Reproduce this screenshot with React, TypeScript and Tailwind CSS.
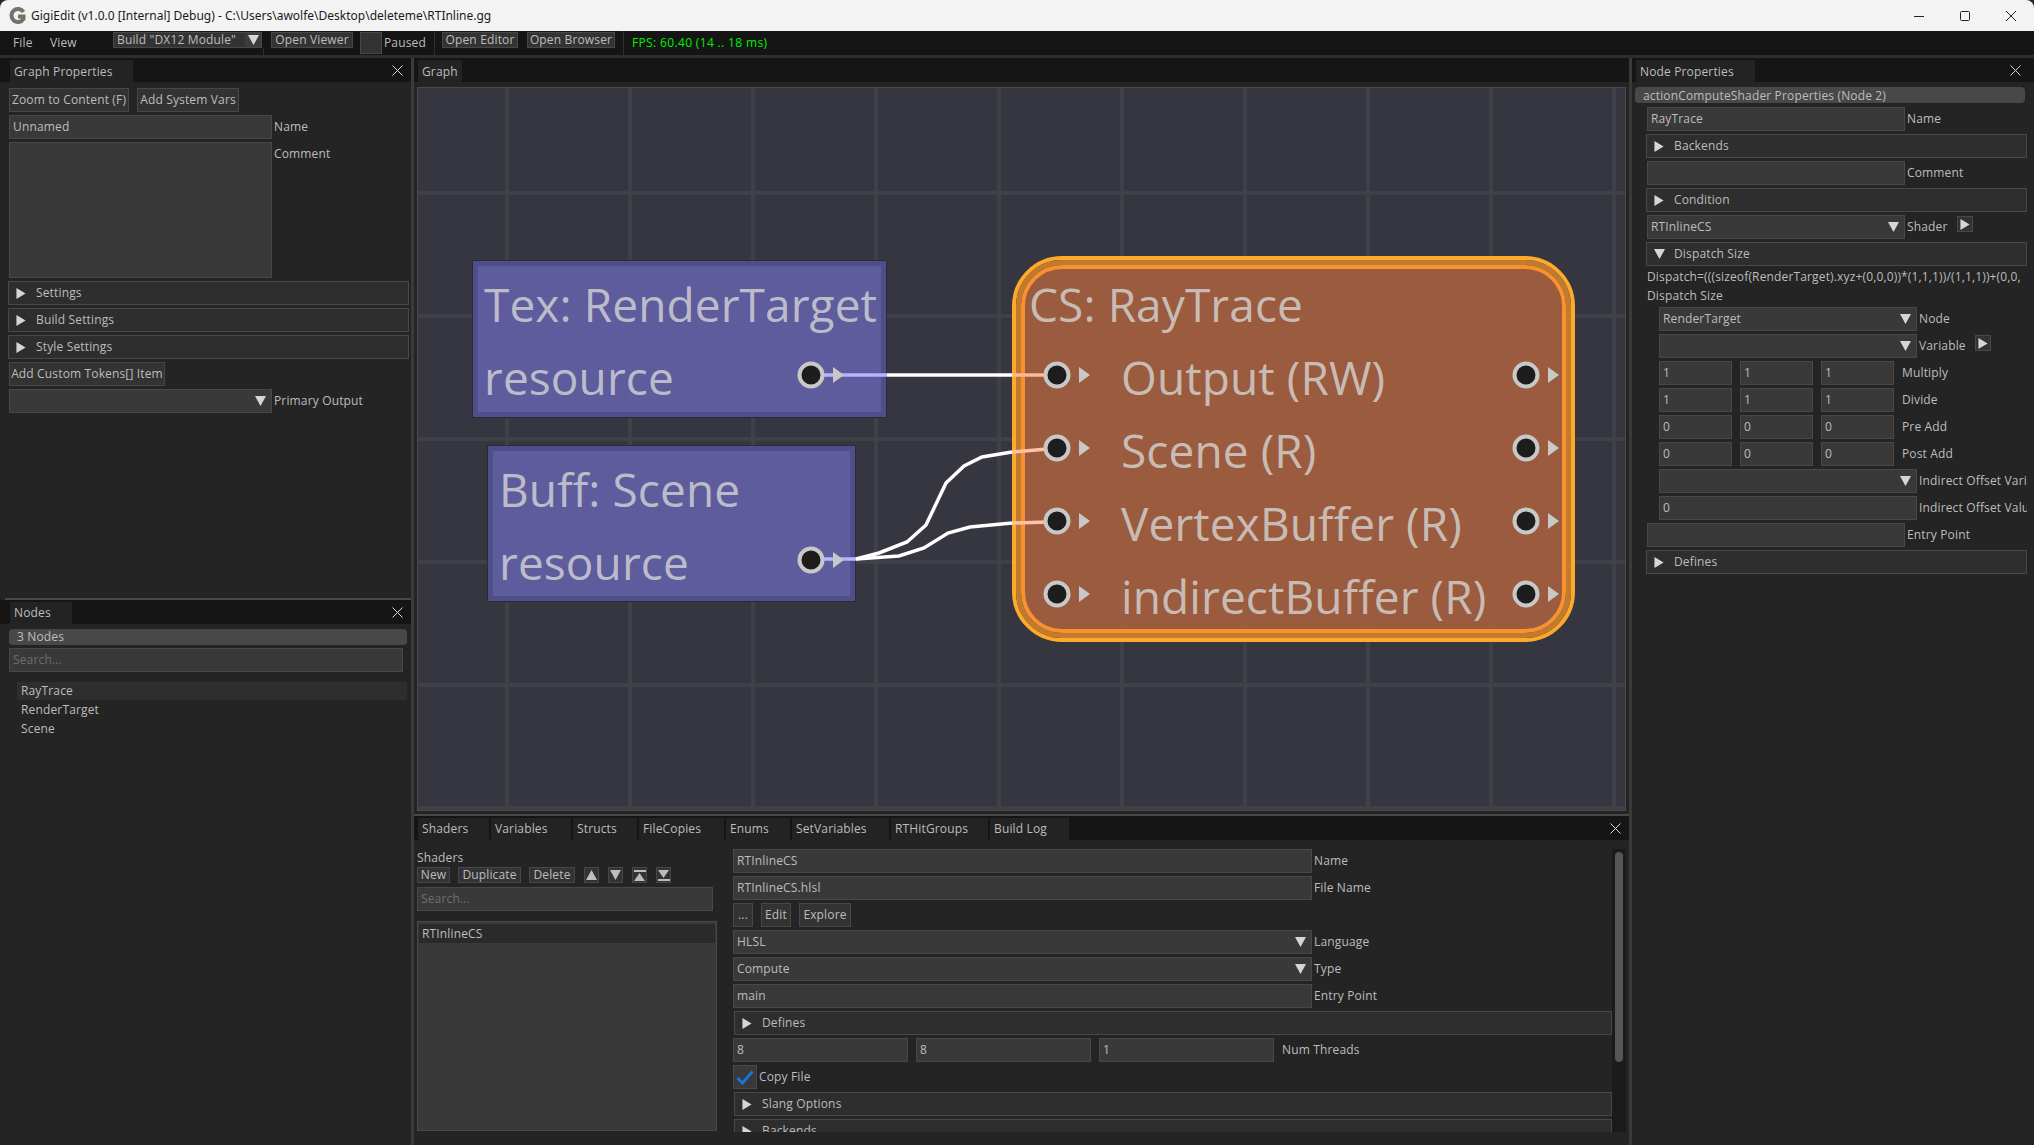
import React from 'react';

const Tri = ({ dir = 'right', size = 10, className = '' }: { dir?: 'right' | 'down' | 'up'; size?: number; className?: string }) => {
  const pts = dir === 'right' ? '0,0 10,6 0,12' : dir === 'down' ? '0,0 12,0 6,11' : '0,11 12,11 6,0';
  const vb = dir === 'right' ? '0 0 10 12' : '0 0 12 11';
  return (
    <svg viewBox={vb} width={size} height={size * 1.1} className={`shrink-0 ${className}`}>
      <polygon points={pts} fill="#d6d6d6" />
    </svg>
  );
};

const CloseX = () => (
  <svg width="11" height="11" viewBox="0 0 11 11" className="shrink-0">
    <path d="M0.5 0.5 L10.5 10.5 M10.5 0.5 L0.5 10.5" stroke="#d8d8d8" strokeWidth="1" />
  </svg>
);

const Btn = ({ children, className = '' }: { children?: React.ReactNode; className?: string }) => (
  <div className={`h-6 flex items-center justify-center px-[3px] bg-[#333333] border border-[#474747] whitespace-nowrap shrink-0 ${className}`}>
    {children}
  </div>
);

const Input = ({ w, children, arrow, muted }: { w: string; children?: React.ReactNode; arrow?: boolean; muted?: boolean }) => (
  <div className={`h-6 ${w} shrink-0 flex items-center justify-between pl-[3px] pr-[5px] bg-[#393939] border border-[#484848] whitespace-nowrap overflow-hidden ${muted ? 'text-[#6e6e6e]' : ''}`}>
    <span>{children}</span>
    {arrow && <Tri dir="down" size={11} />}
  </div>
);

const Header = ({ label, open, w = 'w-full' }: { label: string; open?: boolean; w?: string }) => (
  <div className={`h-6 ${w} shrink-0 flex items-center pl-[7px] bg-[#2e2e2e] border border-[#484848]`}>
    {open ? <Tri dir="down" size={11} /> : <Tri />}
    <span className={open ? 'ml-[9px]' : 'ml-[10px]'}>{label}</span>
  </div>
);

const Field = ({ w, label, value, arrow, extra }: { w: string; label: string; value?: string; arrow?: boolean; extra?: boolean }) => (
  <div className="flex items-center h-6 whitespace-nowrap">
    <Input w={w} arrow={arrow}>{value}</Input>
    <span className="ml-[2px]">{label}</span>
    {extra && (
      <div className="ml-[9px] -mt-[6px] w-[16px] h-[16px] bg-[#333333] border border-[#484848] flex items-center justify-center">
        <Tri />
      </div>
    )}
  </div>
);

const Triple = ({ label, v }: { label: string; v: string }) => (
  <div className="flex items-center h-6 gap-[8px] whitespace-nowrap">
    <Input w="w-[73px]">{v}</Input>
    <Input w="w-[73px]">{v}</Input>
    <Input w="w-[73px]">{v}</Input>
    <span>{label}</span>
  </div>
);

const PanelTabs = ({ tabs, close, pl, pr, top }: { tabs: { label: string; w: string }[]; close?: boolean; pl: string; pr: string; top?: boolean }) => (
  <div className={`h-6 shrink-0 flex items-end justify-between bg-[#151515] ${pl} ${pr}`}>
    <div className="flex gap-[2px] h-[22px]">
      {tabs.map((t) => (
        <div key={t.label} className={`${t.w} pl-[4px] ${top ? 'pt-px' : 'pb-px'} flex items-center bg-[#232323] whitespace-nowrap`}>{t.label}</div>
      ))}
    </div>
    {close && <div className="h-full flex items-center"><CloseX /></div>}
  </div>
);

const Pin = ({ x, y }: { x: number; y: number }) => (
  <g>
    <circle cx={x} cy={y} r="11.5" fill="#1d1d1d" stroke="#c8c8c8" strokeWidth="4" />
    <polygon points={`${x + 22},${y - 8} ${x + 33},${y} ${x + 22},${y + 8}`} fill="#c8c8c8" />
  </g>
);

const NodeText = ({ x, y, children }: { x: number; y: number; children: React.ReactNode }) => (
  <div className="absolute whitespace-nowrap text-[46px] leading-[60px] text-[#d6d6d6]/80 tracking-[0.1px]" style={{ left: x, top: y }}>
    {children}
  </div>
);

const GraphCanvas = () => {
  const gridX = [507, 630, 753, 876, 999, 1122, 1245, 1368, 1491, 1614];
  const gridY = [193, 316, 439, 562, 685, 808];
  return (
    <div className="relative w-[1209px] h-[724px] overflow-hidden bg-[#353640] border border-[#4a4a4a]">
      <svg className="absolute inset-0" width="1208" height="724" viewBox="418 88 1208 724">
        {gridX.map((x) => <rect key={x} x={x - 2} y="87" width="4" height="726" fill="#3f4048" />)}
        {gridY.map((y) => <rect key={y} x="417" y={y - 2} width="1210" height="4" fill="#3f4048" />)}
      </svg>

      {/* Tex node */}
      <div className="absolute left-[55px] top-[173px] w-[413px] h-[156px] border-[5px] border-[#4c4c87]/90 bg-[#6460a7]/90 outline outline-[#2a2a3c]" />
      {/* Buff node */}
      <div className="absolute left-[70px] top-[358px] w-[367px] h-[155px] border-[5px] border-[#4c4c87]/90 bg-[#6460a7]/90 outline outline-[#2a2a3c]" />
      {/* CS node */}
      <div className="absolute left-[594px] top-[168px] w-[563px] h-[386px] rounded-[50px] border-4 border-[#fdaa2a]">
        <div className="w-full h-full rounded-[46px] border-[5px] border-[#c27a2f]">
          <div className="w-full h-full rounded-[41px] border-4 border-[#f8922f] bg-[#a55f3f]/90" />
        </div>
      </div>

      <NodeText x={66} y={186}>Tex: RenderTarget</NodeText>
      <NodeText x={66} y={259}>resource</NodeText>
      <NodeText x={81} y={371}>Buff: Scene</NodeText>
      <NodeText x={81} y={444}>resource</NodeText>
      <NodeText x={611} y={186}>CS: RayTrace</NodeText>
      <NodeText x={703} y={259}>Output (RW)</NodeText>
      <NodeText x={703} y={332}>Scene (R)</NodeText>
      <NodeText x={703} y={405}>VertexBuffer (R)</NodeText>
      <NodeText x={703} y={478}>indirectBuffer (R)</NodeText>

      <svg className="absolute inset-0" width="1208" height="724" viewBox="418 88 1208 724">
        <g fill="none" strokeWidth="3.5">
          <path d="M824 375 H887" stroke="#b4b4ff" />
          <path d="M887 375 H1012" stroke="#ffffff" />
          <path d="M1012 375 H1047" stroke="#ffb898" />
          <path d="M824 559 H856" stroke="#b4b4ff" />
          <polyline points="856,559 879,553 907,542 926,525 946,483 964,466 982,457 1012,452" stroke="#ffffff" />
          <polyline points="856,559 899,556 924,548 948,533 970,527 1012,523" stroke="#ffffff" />
          <path d="M1012 452 L1047 449" stroke="#ffc4a8" />
          <path d="M1012 523 L1047 522" stroke="#ffc4a8" />
        </g>
        <Pin x={811} y={375} />
        <Pin x={811} y={560} />
        {[375, 448, 521, 594].map((y) => (
          <g key={y}>
            <Pin x={1057} y={y} />
            <Pin x={1526} y={y} />
          </g>
        ))}
      </svg>
    </div>
  );
};

const TitleBar = () => (
  <div className="h-[31px] shrink-0 flex items-center bg-[#f3f3f3] rounded-t-[8px] text-[#1a1a1a] text-[12px] tracking-normal font-['Noto_Sans',sans-serif]">
    <svg width="17" height="18" viewBox="0 0 17 18" className="ml-[9px]">
      <path d="M14.5 5 A6.5 6.5 0 1 0 14.5 12 V9.5 H9" fill="none" stroke="#6f7568" strokeWidth="4" />
    </svg>
    <span className="ml-[5px] whitespace-nowrap">GigiEdit (v1.0.0 [Internal] Debug) - C:\Users\awolfe\Desktop\deleteme\RTInline.gg</span>
    <div className="ml-auto flex h-full">
      <div className="w-[46px] flex items-center justify-center">
        <svg width="10" height="10" viewBox="0 0 10 10"><path d="M0 5.5 H10" stroke="#222" /></svg>
      </div>
      <div className="w-[46px] flex items-center justify-center">
        <svg width="10" height="10" viewBox="0 0 10 10"><rect x="0.5" y="0.5" width="9" height="9" rx="1" fill="none" stroke="#222" /></svg>
      </div>
      <div className="w-[46px] flex items-center justify-center">
        <svg width="10" height="10" viewBox="0 0 10 10"><path d="M0 0 L10 10 M10 0 L0 10" stroke="#222" /></svg>
      </div>
    </div>
  </div>
);

const MenuBtn = ({ children, w }: { children: React.ReactNode; w: string }) => (
  <div className={`h-[16px] ${w} mt-px flex items-center justify-center bg-[#333333] border border-[#474747] whitespace-nowrap shrink-0`}>{children}</div>
);

const Sep = () => <div className="w-px h-[24px] bg-[#2f2f2f] shrink-0" />;

const MenuBar = () => (
  <div className="h-6 shrink-0 flex items-center bg-[#151515]">
    <span className="ml-[13px] w-[37px]">File</span>
    <span className="w-[63px]">View</span>
    <div className="w-[149px] h-[16px] mt-px self-start flex bg-[#333333] border border-[#474747] whitespace-nowrap">
      <span className="pl-[3px] flex-1 leading-[14px]">Build "DX12 Module"</span>
      <div className="w-[16px] bg-[#3d3d3d] flex items-center justify-center"><Tri dir="down" size={11} /></div>
    </div>
    <div className="ml-[1px] self-end h-[7px] w-px bg-[#2f2f2f]" />
    <div className="ml-[7px] self-start"><MenuBtn w="w-[82px]">Open Viewer</MenuBtn></div>
    <div className="ml-[7px] w-[22px] h-[22px] self-start mt-[1px] bg-[#333333] border border-[#474747]" />
    <span className="ml-[2px] w-[50px]">Paused</span>
    <Sep />
    <div className="ml-[7px] self-start"><MenuBtn w="w-[76px]">Open Editor</MenuBtn></div>
    <div className="ml-[9px] self-start"><MenuBtn w="w-[88px]">Open Browser</MenuBtn></div>
    <div className="ml-[8px]"><Sep /></div>
    <span className="ml-[8px] text-[#00f000] tracking-[0.35px] whitespace-nowrap">FPS: 60.40 (14 .. 18 ms)</span>
  </div>
);

const GraphProperties = () => (
  <div className="flex-1 flex flex-col min-h-0">
    <PanelTabs tabs={[{ label: 'Graph Properties', w: 'w-[123px]' }]} close top pl="pl-[10px]" pr="pr-[8px]" />
    <div className="flex flex-col gap-[3px] pl-[8px] pr-[2px] pt-[6px]">
      <div className="flex gap-[8px] pl-px">
        <Btn className="w-[120px]">Zoom to Content (F)</Btn>
        <Btn className="w-[102px]">Add System Vars</Btn>
      </div>
      <div className="pl-px"><Field w="w-[263px]" label="Name" value="Unnamed" /></div>
      <div className="flex pl-px">
        <div className="w-[263px] h-[136px] shrink-0 bg-[#393939] border border-[#484848]" />
        <span className="ml-[2px] mt-[3px]">Comment</span>
      </div>
      <Header label="Settings" />
      <Header label="Build Settings" />
      <Header label="Style Settings" />
      <div className="pl-px"><Btn className="w-[156px]">Add Custom Tokens[] Item</Btn></div>
      <div className="pl-px"><Field w="w-[263px]" label="Primary Output" arrow /></div>
    </div>
  </div>
);

const NodesPanel = () => (
  <div className="h-[545px] shrink-0 flex flex-col">
    <PanelTabs tabs={[{ label: 'Nodes', w: 'w-[62px]' }]} close pl="pl-[10px]" pr="pr-[8px]" />
    <div className="flex flex-col pl-[9px] pr-[4px] pt-[5px]">
      <div className="h-[16px] rounded-[4px] bg-[#484848] pl-[8px] flex items-center">3 Nodes</div>
      <div className="mt-[3px] pr-[4px]"><Input w="w-full" muted>Search...</Input></div>
      <div className="mt-[10px] ml-[8px] flex flex-col">
        <div className="h-[18px] pl-[4px] flex items-center bg-[#2e2e2e]">RayTrace</div>
        <div className="h-[19px] pl-[4px] flex items-center">RenderTarget</div>
        <div className="h-[19px] pl-[4px] flex items-center">Scene</div>
      </div>
    </div>
  </div>
);

const IconBtn = ({ bar, dir }: { bar?: boolean; dir: 'up' | 'down' }) => (
  <div className="w-[15px] h-[16px] shrink-0 bg-[#333333] border border-[#474747] flex flex-col items-center justify-center">
    {bar && dir === 'up' && <div className="w-[12px] h-[2px] bg-[#bdbdbd] mb-px" />}
    <svg width="11" height={bar ? 8 : 10} viewBox="0 0 11 10" preserveAspectRatio="none">
      <polygon points={dir === 'up' ? '0,10 11,10 5.5,0' : '0,0 11,0 5.5,10'} fill="#bdbdbd" />
    </svg>
    {bar && dir === 'down' && <div className="w-[12px] h-[2px] bg-[#bdbdbd] mt-px" />}
  </div>
);

const BottomTabs = [
  { label: 'Shaders', w: 'w-[71px]' },
  { label: 'Variables', w: 'w-[80px]' },
  { label: 'Structs', w: 'w-[64px]' },
  { label: 'FileCopies', w: 'w-[85px]' },
  { label: 'Enums', w: 'w-[64px]' },
  { label: 'SetVariables', w: 'w-[97px]' },
  { label: 'RTHitGroups', w: 'w-[97px]' },
  { label: 'Build Log', w: 'w-[79px]' },
];

const ShadersPanel = () => (
  <div className="flex-1 flex flex-col min-h-0">
    <PanelTabs tabs={BottomTabs} close pl="pl-[4px]" pr="pr-[8px]" />
    <div className="flex pl-[3px] pt-[9px] h-[292px]">
      <div className="w-[300px] shrink-0 flex flex-col">
        <div className="h-[17px] flex items-center">Shaders</div>
        <div className="flex items-center gap-[8px] mt-px">
          <div className="h-[16px] w-[33px] flex items-center justify-center bg-[#333333] border border-[#474747]">New</div>
          <div className="h-[16px] w-[63px] flex items-center justify-center bg-[#333333] border border-[#474747]">Duplicate</div>
          <div className="h-[16px] w-[46px] flex items-center justify-center bg-[#333333] border border-[#474747]">Delete</div>
          <div className="flex gap-[9px] ml-px">
            <IconBtn dir="up" />
            <IconBtn dir="down" />
            <IconBtn dir="up" bar />
            <IconBtn dir="down" bar />
          </div>
        </div>
        <div className="mt-[4px] w-[296px]"><Input w="w-full" muted>Search...</Input></div>
        <div className="mt-[10px] h-[210px] bg-[#393939] border border-[#484848] pt-[2px] px-px">
          <div className="h-[19px] pl-[3px] flex items-center bg-[#2a2a2a]">RTInlineCS</div>
        </div>
      </div>
      <div className="ml-[16px] w-[879px] h-[283px] overflow-hidden flex flex-col gap-[3px]">
        <Field w="w-[579px]" label="Name" value="RTInlineCS" />
        <Field w="w-[579px]" label="File Name" value="RTInlineCS.hlsl" />
        <div className="flex gap-[8px]">
          <Btn className="w-[20px]">...</Btn>
          <Btn className="w-[30px]">Edit</Btn>
          <Btn className="w-[52px]">Explore</Btn>
        </div>
        <Field w="w-[579px]" label="Language" value="HLSL" arrow />
        <Field w="w-[579px]" label="Type" value="Compute" arrow />
        <Field w="w-[579px]" label="Entry Point" value="main" />
        <div className="pl-px"><Header label="Defines" /></div>
        <div className="flex items-center gap-[8px] whitespace-nowrap">
          <Input w="w-[175px]">8</Input>
          <Input w="w-[175px]">8</Input>
          <Input w="w-[175px]">1</Input>
          <span>Num Threads</span>
        </div>
        <div className="flex items-center">
          <div className="w-6 h-6 bg-[#393939] border border-[#484848] flex items-center justify-center">
            <svg width="18" height="15" viewBox="0 0 18 15"><path d="M1.5 8 L6.5 13 L16.5 1.5" fill="none" stroke="#1a73d8" strokeWidth="3" /></svg>
          </div>
          <span className="ml-[2px]">Copy File</span>
        </div>
        <div className="pl-px"><Header label="Slang Options" /></div>
        <div className="pl-px"><Header label="Backends" /></div>
      </div>
      <div className="w-[14px] h-[283px] shrink-0 bg-[#1b1b1b] pt-[3px] pl-[3px]">
        <div className="w-[8px] h-[210px] rounded-[4px] bg-[#565656]" />
      </div>
    </div>
  </div>
);

const NodeProperties = () => (
  <div className="flex-1 flex flex-col min-w-0">
    <PanelTabs tabs={[{ label: 'Node Properties', w: 'w-[119px]' }]} close top pl="pl-[4px]" pr="pr-[13px]" />
    <div className="flex flex-col pl-[3px] pr-[9px] pt-[5px]">
      <div className="h-[16px] rounded-[4px] bg-[#484848] pl-[8px] pt-px flex items-center whitespace-nowrap">actionComputeShader Properties (Node 2)</div>
      <div className="mt-[4px] ml-[11px] w-[381px] flex flex-col gap-[3px] overflow-hidden">
        <div className="pl-px"><Field w="w-[258px]" label="Name" value="RayTrace" /></div>
        <Header label="Backends" />
        <div className="pl-px"><Field w="w-[258px]" label="Comment" /></div>
        <Header label="Condition" />
        <div className="pl-px"><Field w="w-[258px]" label="Shader" value="RTInlineCS" arrow extra /></div>
        <Header label="Dispatch Size" open />
        <div className="h-[16px] flex items-center pl-px whitespace-nowrap">Dispatch=(((sizeof(RenderTarget).xyz+(0,0,0))*(1,1,1))/(1,1,1))+(0,0,</div>
        <div className="h-[16px] flex items-center pl-px">Dispatch Size</div>
        <div className="pl-[13px] flex flex-col gap-[3px]">
          <Field w="w-[258px]" label="Node" value="RenderTarget" arrow />
          <Field w="w-[258px]" label="Variable" arrow extra />
          <Triple label="Multiply" v="1" />
          <Triple label="Divide" v="1" />
          <Triple label="Pre Add" v="0" />
          <Triple label="Post Add" v="0" />
          <Field w="w-[258px]" label="Indirect Offset Variable" arrow />
          <Field w="w-[258px]" label="Indirect Offset Value" value="0" />
        </div>
        <div className="pl-px"><Field w="w-[258px]" label="Entry Point" /></div>
        <Header label="Defines" />
      </div>
    </div>
  </div>
);

export default function App() {
  return (
    <div className="w-[2034px] h-[1145px] flex flex-col overflow-hidden bg-[#242424] text-[12px] text-[#bdbdbd] tracking-[0.15px] font-['Open_Sans',sans-serif]">
      <TitleBar />
      <MenuBar />
      <div className="h-[3px] shrink-0 bg-[#2d2d2d]" />
      <div className="flex-1 flex min-h-0">
        <div className="w-[411px] shrink-0 flex flex-col">
          <GraphProperties />
          <div className="h-[2px] shrink-0 ml-[5px] bg-[#484848]" />
          <NodesPanel />
        </div>
        <div className="w-[3px] shrink-0 bg-[#3a3a3a]" />
        <div className="w-[1215px] shrink-0 flex flex-col">
          <div className="h-[756px] shrink-0 flex flex-col">
            <PanelTabs tabs={[{ label: 'Graph', w: 'w-[44px]' }]} top pl="pl-[4px]" pr="pr-[8px]" />
            <div className="pl-[3px] pt-[5px]"><GraphCanvas /></div>
          </div>
          <div className="h-[2px] shrink-0 bg-[#484848]" />
          <ShadersPanel />
        </div>
        <div className="w-[3px] shrink-0 bg-[#3a3a3a]" />
        <NodeProperties />
      </div>
    </div>
  );
}
